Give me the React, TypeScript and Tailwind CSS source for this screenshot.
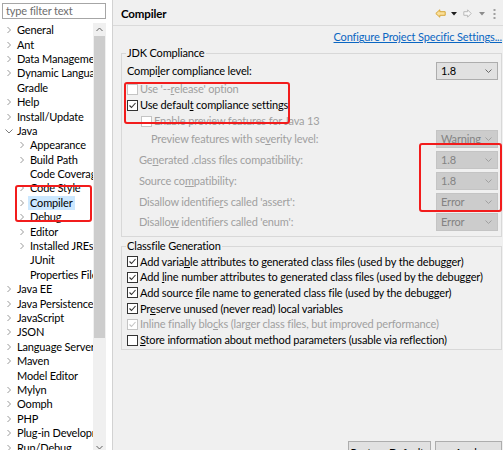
import React from "react";

type Kind = "closed" | "open" | "leaf";
type Item = { label: string; level: 0 | 1; kind: Kind; selected?: boolean };

const items: Item[] = [
  { label: "General", level: 0, kind: "closed" },
  { label: "Ant", level: 0, kind: "closed" },
  { label: "Data Management", level: 0, kind: "closed" },
  { label: "Dynamic Languages", level: 0, kind: "closed" },
  { label: "Gradle", level: 0, kind: "leaf" },
  { label: "Help", level: 0, kind: "closed" },
  { label: "Install/Update", level: 0, kind: "closed" },
  { label: "Java", level: 0, kind: "open" },
  { label: "Appearance", level: 1, kind: "closed" },
  { label: "Build Path", level: 1, kind: "closed" },
  { label: "Code Coverage", level: 1, kind: "leaf" },
  { label: "Code Style", level: 1, kind: "closed" },
  { label: "Compiler", level: 1, kind: "closed", selected: true },
  { label: "Debug", level: 1, kind: "closed" },
  { label: "Editor", level: 1, kind: "closed" },
  { label: "Installed JREs", level: 1, kind: "closed" },
  { label: "JUnit", level: 1, kind: "leaf" },
  { label: "Properties Files", level: 1, kind: "leaf" },
  { label: "Java EE", level: 0, kind: "closed" },
  { label: "Java Persistence", level: 0, kind: "closed" },
  { label: "JavaScript", level: 0, kind: "closed" },
  { label: "JSON", level: 0, kind: "closed" },
  { label: "Language Servers", level: 0, kind: "closed" },
  { label: "Maven", level: 0, kind: "closed" },
  { label: "Model Editor", level: 0, kind: "leaf" },
  { label: "Mylyn", level: 0, kind: "closed" },
  { label: "Oomph", level: 0, kind: "closed" },
  { label: "PHP", level: 0, kind: "closed" },
  { label: "Plug-in Development", level: 0, kind: "closed" },
  { label: "Run/Debug", level: 0, kind: "closed" },
];

function TreeChevron({ kind }: { kind: Kind }) {
  if (kind === "leaf") return <span className="w-[8px] shrink-0" />;
  if (kind === "open")
    return (
      <svg width="8" height="8" viewBox="0 0 8 8" className="shrink-0">
        <path d="M0.5 2.5 L4 6 L7.5 2.5" fill="none" stroke="#7d7d7d" strokeWidth="1" />
      </svg>
    );
  return (
    <svg width="8" height="8" viewBox="0 0 8 8" className="shrink-0">
      <path d="M2.5 1 L5.5 4 L2.5 7" fill="none" stroke="#9a9a9a" strokeWidth="1" />
    </svg>
  );
}

function Tree() {
  return (
    <div className="w-[93px] overflow-hidden">
      {items.map((it) => (
        <div
          key={it.label}
          className={`h-[14.4px] flex items-center whitespace-nowrap ${it.level === 0 ? "pl-[5px]" : "pl-[18px]"}`}
        >
          <TreeChevron kind={it.kind} />
          {it.selected ? (
            <span className="ml-[2px] px-[2px] h-[14px] flex items-center bg-[#cce8ff] text-black">{it.label}</span>
          ) : (
            <span className="ml-[4px] text-black">{it.label}</span>
          )}
        </div>
      ))}
    </div>
  );
}

function Scrollbar() {
  return (
    <div className="w-[13px] bg-[#f0f0f0] flex flex-col">
      <div className="h-[13px] flex items-center justify-center">
        <svg width="7" height="5" viewBox="0 0 7 5">
          <path d="M0.5 4 L3.5 1 L6.5 4" fill="none" stroke="#606060" strokeWidth="1" />
        </svg>
      </div>
      <div className="h-[302px] mx-[1px] bg-[#cdcdcd]" />
      <div className="flex-1" />
      <div className="h-[14px] flex items-center justify-center">
        <svg width="7" height="5" viewBox="0 0 7 5">
          <path d="M0.5 1 L3.5 4 L6.5 1" fill="none" stroke="#606060" strokeWidth="1" />
        </svg>
      </div>
    </div>
  );
}

function Check({ checked, disabled }: { checked?: boolean; disabled?: boolean }) {
  const border = disabled ? "border-[#c4c4c4]" : "border-[#333333]";
  const stroke = disabled ? "#c4c4c4" : "#333333";
  return (
    <span className={`w-[11px] h-[11px] shrink-0 border ${border} bg-white flex items-center justify-center`}>
      {checked && (
        <svg width="9" height="9" viewBox="0 0 9 9">
          <path d="M1.5 4.5 L3.5 6.5 L7.5 2" fill="none" stroke={stroke} strokeWidth="1.1" />
        </svg>
      )}
    </span>
  );
}

function Combo({ value, disabled }: { value: string; disabled?: boolean }) {
  return (
    <div
      className={`w-[62px] h-[18px] shrink-0 border flex items-center justify-between pl-[4px] pr-[5px] ${
        disabled ? "bg-[#cccccc] border-[#c4c4c4] text-[#838383]" : "bg-[#e1e1e1] border-[#adadad] text-black"
      }`}
    >
      <span>{value}</span>
      <svg width="7" height="4" viewBox="0 0 7 4">
        <path d="M0.5 0.5 L3.5 3.5 L6.5 0.5" fill="none" stroke={disabled ? "#a0a0a0" : "#6a6a6a"} strokeWidth="1" />
      </svg>
    </div>
  );
}

function NavIcons() {
  return (
    <div className="flex items-center pr-[7px] pt-[2px]">
      <svg width="11" height="9" viewBox="0 0 11 9">
        <path d="M0.8 4.5 L4.8 0.8 L4.8 2.7 L10.2 2.7 L10.2 6.3 L4.8 6.3 L4.8 8.2 Z" fill="#fbe09a" stroke="#d6a537" strokeWidth="1" />
      </svg>
      <svg width="6" height="4" viewBox="0 0 6 4" className="ml-[5px]">
        <path d="M0 0 L6 0 L3 3.5 Z" fill="#1e1e1e" />
      </svg>
      <svg width="9" height="9" viewBox="0 0 9 9" className="ml-[6px]">
        <path d="M8.2 4.5 L4.6 0.8 L4.6 2.7 L0.8 2.7 L0.8 6.3 L4.6 6.3 L4.6 8.2 Z" fill="#f7f7f7" stroke="#b9b9b9" strokeWidth="1" />
      </svg>
      <svg width="6" height="4" viewBox="0 0 6 4" className="ml-[7px]">
        <path d="M0 0 L6 0 L3 3.5 Z" fill="#8c8c8c" />
      </svg>
      <svg width="3" height="10" viewBox="0 0 3 10" className="ml-[8px]">
        <rect x="0.5" y="0" width="2" height="2" fill="#a0a0a0" />
        <rect x="0.5" y="4" width="2" height="2" fill="#a0a0a0" />
        <rect x="0.5" y="8" width="2" height="2" fill="#a0a0a0" />
      </svg>
    </div>
  );
}

const dis = "text-[#a0a0a0]";

function CheckRow({ children, checked, disabled, indent }: { children: React.ReactNode; checked?: boolean; disabled?: boolean; indent?: boolean }) {
  return (
    <div className={`h-[16px] flex items-center whitespace-nowrap ${indent ? "pl-[14px]" : ""}`}>
      <Check checked={checked} disabled={disabled} />
      <span className={`ml-[2px] ${disabled ? dis : "text-black"}`}>{children}</span>
    </div>
  );
}

function ComboRow({ children, value, indent }: { children: React.ReactNode; value: string; indent: string }) {
  return (
    <div className="h-[20.75px] flex items-center justify-between whitespace-nowrap">
      <span className={`${indent} ${dis}`}>{children}</span>
      <Combo value={value} disabled />
    </div>
  );
}

function CfRow({ children, checked, disabled }: { children: React.ReactNode; checked?: boolean; disabled?: boolean }) {
  return (
    <div className="h-[15.7px] flex items-center whitespace-nowrap">
      <Check checked={checked} disabled={disabled} />
      <span className={`ml-[2px] ${disabled ? dis : "text-black"}`}>{children}</span>
    </div>
  );
}

export default function App() {
  return (
    <div className="relative w-[503px] h-[450px] overflow-hidden flex bg-[#f0f0f0] font-['Lato',sans-serif] text-[11px] leading-[14px] tracking-[-0.15px] text-black">
      {/* Left panel */}
      <div className="w-[112px] h-full bg-white flex flex-col shrink-0">
        <div className="mt-[3px] ml-[2px] w-[104px] h-[18px] border border-[#a6a6a6] flex items-center pl-[3px] text-[#6d6d6d] bg-white">
          type filter text
        </div>
        <div className="mt-[4px] flex-1 flex">
          <Tree />
          <Scrollbar />
          <div className="flex-1" />
        </div>
      </div>

      {/* Right panel */}
      <div className="flex-1 h-full border-l border-[#d2d2d2] flex flex-col">
        <div className="h-[26px] shrink-0 border-b border-[#dadada] flex items-center justify-between pl-[8px]">
          <span className="font-bold text-[11.5px] pt-[2px]">Compiler</span>
          <NavIcons />
        </div>
        <div className="h-[22px] shrink-0 flex items-center justify-end pr-[1px]">
          <span className="text-[#0a66c2] underline whitespace-nowrap">Configure Project Specific Settings...</span>
        </div>

        {/* JDK Compliance */}
        <div className="relative mt-[5px] ml-[8px] mr-[1px] border border-[#d8d8d8] pt-[7px] pb-[3px] pl-[5px] pr-[3px]">
          <span className="absolute -top-[8px] left-[4px] px-[1px] bg-[#f0f0f0] leading-[14px]">JDK Compliance</span>
          <div className="h-[20px] flex items-center justify-between whitespace-nowrap">
            <span>Compi<u>l</u>er compliance level:</span>
            <Combo value="1.8" />
          </div>
          <CheckRow disabled>Use '--<u>r</u>elease' option</CheckRow>
          <CheckRow checked>Use defaul<u>t</u> compliance settings</CheckRow>
          <CheckRow disabled indent>Enable preview features for Java 13</CheckRow>
          <ComboRow value="Warning" indent="pl-[24px]">Preview features with se<u>v</u>erity level:</ComboRow>
          <ComboRow value="1.8" indent="pl-[12px]">Ge<u>n</u>erated .class files compatibility:</ComboRow>
          <ComboRow value="1.8" indent="pl-[12px]">Source co<u>m</u>patibility:</ComboRow>
          <ComboRow value="Error" indent="pl-[12px]">Disallow identifie<u>r</u>s called 'assert':</ComboRow>
          <ComboRow value="Error" indent="pl-[12px]">Disallo<u>w</u> identifiers called 'enum':</ComboRow>
        </div>

        {/* Classfile Generation */}
        <div className="relative mt-[9px] ml-[8px] mr-[1px] border border-[#d8d8d8] pt-[7px] pb-[1px] pl-[5px]">
          <span className="absolute -top-[8px] left-[4px] px-[1px] bg-[#f0f0f0] leading-[14px]">Classfile Generation</span>
          <CfRow checked>Add varia<u>b</u>le attributes to generated class files (used by the debugger)</CfRow>
          <CfRow checked>Add <u>l</u>ine number attributes to generated class files (used by the debugger)</CfRow>
          <CfRow checked>Add source <u>f</u>ile name to generated class file (used by the debugger)</CfRow>
          <CfRow checked>Pr<u>e</u>serve unused (never read) local variables</CfRow>
          <CfRow checked disabled>Inline finally blo<u>c</u>ks (larger class files, but improved performance)</CfRow>
          <CfRow><u>S</u>tore information about method parameters (usable via reflection)</CfRow>
        </div>

        {/* Buttons */}
        <div className="mt-[91px] flex justify-end gap-[4px] pr-[1px] shrink-0">
          <div className="w-[83px] h-[25px] border border-[#adadad] bg-[#e1e1e1] flex items-center justify-center">Restore Defaults</div>
          <div className="w-[67px] h-[25px] border border-[#adadad] bg-[#e1e1e1] flex items-center justify-center">Apply</div>
        </div>
      </div>

      {/* Red annotation boxes */}
      <div className="absolute left-[15px] top-[185px] w-[77px] h-[37px] border-2 border-[#f21c1c] rounded-[3px]" />
      <div className="absolute left-[124px] top-[82px] w-[166px] h-[42px] border-2 border-[#f21c1c] rounded-[3px]" />
      <div className="absolute left-[419px] top-[143px] w-[83px] h-[69px] border-2 border-[#f21c1c] rounded-[3px]" />
    </div>
  );
}
